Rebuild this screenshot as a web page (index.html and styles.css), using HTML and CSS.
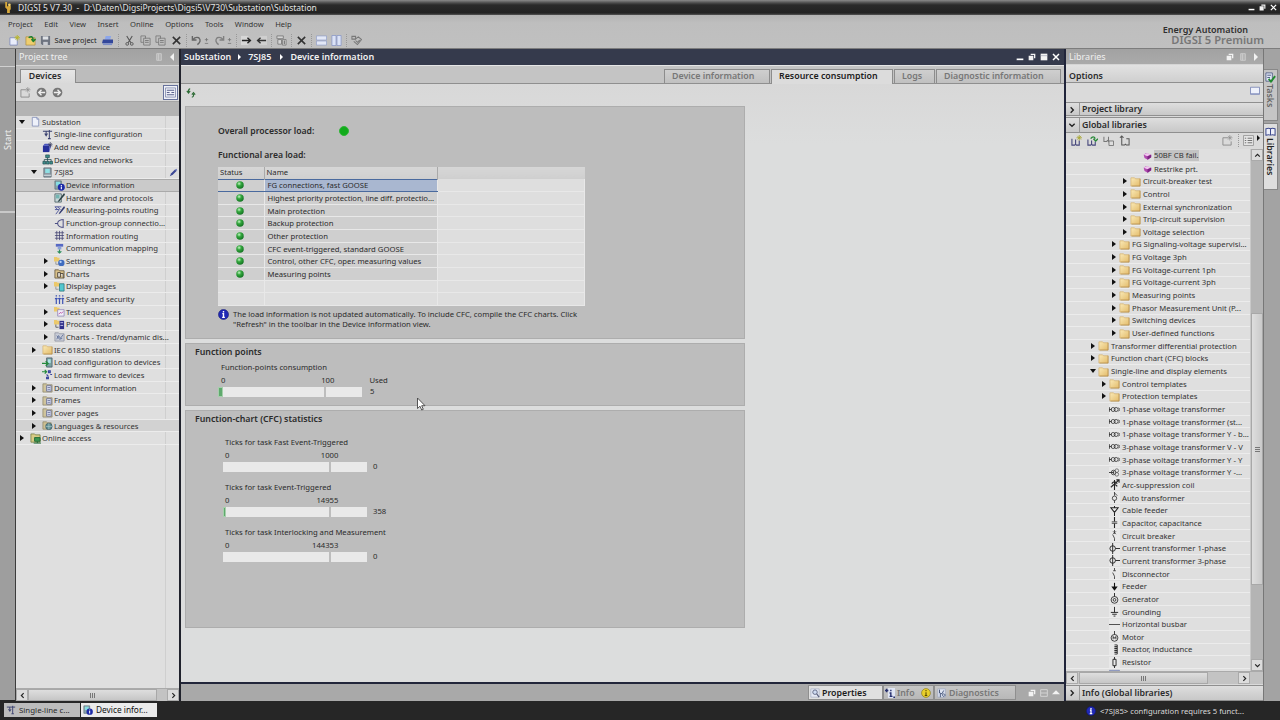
FILE: index.html
```html
<!DOCTYPE html>
<html lang="en">
<head>
    <meta charset="UTF-8">
    <meta name="viewport" content="width=device-width, initial-scale=1.0">
    <title>DIGSI 5 V7.30</title>
    <link rel="stylesheet" href="styles.css">
</head>
<body>

    <!-- icon sprite -->
    <svg class="sprite">
        <defs>
            <linearGradient id="gFolder" x1="0" y1="0" x2="1" y2="1"><stop offset="0" stop-color="#faeab8"/><stop offset="1" stop-color="#e3bb69"/></linearGradient>
            <radialGradient id="gBall" cx=".38" cy=".32" r=".7"><stop offset="0" stop-color="#c8f5c8"/><stop offset=".4" stop-color="#35a83f"/><stop offset="1" stop-color="#117320"/></radialGradient>
        </defs>
        <symbol id="folder" viewBox="0 0 12 12"><path d="M1 2h4l1 1h5v8H1z" fill="url(#gFolder)" stroke="#d0ab66" stroke-width=".7"/><path d="M11 3v8H2" fill="none" stroke="#a8823f" stroke-width=".6"/></symbol>
        <symbol id="page" viewBox="0 0 12 12"><path d="M2.500 1.500h5l2 2v7.500h-7z" fill="#eef1fa" stroke="#7a86b4" stroke-width=".8"/><path d="M7.500 1.500v2h2" fill="none" stroke="#7a86b4" stroke-width=".8"/></symbol>
        <symbol id="line" viewBox="0 0 12 12"><path d="M1 2.500h10M4.500 2.500v5M8 1v9.500M3 5l1.500 2.500L6 5M6.500 10.500h3" fill="none" stroke="#39406f" stroke-width="1.100"/></symbol>
        <symbol id="add" viewBox="0 0 12 12"><path d="M1 4h7v7H1z" fill="#26309a"/><path d="M1 4l2-2h5l2 2-2 7V4z" fill="#4a55bd"/><path d="M9 0v6M6.500 3h5M7.300 1.300l3.500 3.500M10.800 1.300L7.300 4.800" stroke="#3c4160" stroke-width=".8"/></symbol>
        <symbol id="net" viewBox="0 0 12 12"><path d="M4 1h4v3H4zM1 8h3v3H1zM4.700 8h3v3h-3zM8.500 8h3v3h-3z" fill="#3d8f8c" stroke="#20494f" stroke-width=".7"/><path d="M6 4v4M2.500 8V6h7.500v2" fill="none" stroke="#20494f" stroke-width=".8"/></symbol>
        <symbol id="device" viewBox="0 0 12 12"><path d="M2 1h8v10H2z" fill="#8a99a3" stroke="#5b6872" stroke-width=".8"/><path d="M3.500 2h5v4.500h-5z" fill="#8fe0e4"/><path d="M2 9h8" stroke="#dfe6ea"/></symbol>
        <symbol id="devinfo" viewBox="0 0 12 12"><path d="M1 1h7v9H1z" fill="#8aa5ab" stroke="#50666e" stroke-width=".7"/><path d="M2.200 2h4.500v4H2.200z" fill="#86dde2"/><circle cx="8" cy="8" r="3.800" fill="#1d2ba8"/><path d="M8 5.500v1M8 7.200v3" stroke="#fff" stroke-width="1.200"/></symbol>
        <symbol id="hardware" viewBox="0 0 12 12"><path d="M1 2h7v9H1z" fill="#c9d7d8" stroke="#3c5459" stroke-width=".8"/><path d="M2 3h4v4H2z" fill="#74b5b2"/><path d="M11 1L5 9l-1 2 2-1 6-7z" fill="#2b4245"/></symbol>
        <symbol id="measure" viewBox="0 0 12 12"><path d="M1 2h7M1 5h5M1 2l4 4-3 4M4 2l3 3" fill="none" stroke="#4b5299" stroke-width="1"/><path d="M11 1L6 8l-1 2 2-1 5-6z" fill="#333b70"/></symbol>
        <symbol id="fgroup" viewBox="0 0 12 12"><path d="M10 1v10M10 2H8Q4 3 4 6t4 4h2M1 6h3" fill="none" stroke="#4d4f86" stroke-width="1.100"/></symbol>
        <symbol id="grid" viewBox="0 0 12 12"><path d="M3 1v10M6 1v10M9 1v10M1 3h10M1 6h10M1 9h10" stroke="#3d3d6e" stroke-width=".8"/></symbol>
        <symbol id="comm" viewBox="0 0 12 12"><path d="M2 1h8v3H2z" fill="#5769c4"/><path d="M4 4h4v3H4z" fill="#8ba0d8"/><path d="M6 7v4M4 9l2 2 2-2" fill="none" stroke="#2c8f5c" stroke-width="1.200"/></symbol>
        <symbol id="settings" viewBox="0 0 12 12"><path d="M0 1h3l1 1h2v4H0z" fill="#ecc96b"/><circle cx="8" cy="7.500" r="3.500" fill="#3f6cc0"/><circle cx="7.200" cy="6.500" r="1.200" fill="#b8d2f5"/><path d="M2 6v3h3" fill="none" stroke="#777" stroke-width=".7"/></symbol>
        <symbol id="charts" viewBox="0 0 12 12"><path d="M1 2h4l1 1h5v8H1z" fill="#d9c18a" stroke="#594c33" stroke-width=".8"/><path d="M4 5h3v5H4zM7 6h3v5" fill="#e6e2d8" stroke="#40382f" stroke-width=".9"/></symbol>
        <symbol id="display" viewBox="0 0 12 12"><path d="M0 1h3l1 1h2v4H0z" fill="#ecc96b"/><path d="M6 3h5v8H6z" fill="#53c7cf" stroke="#277278" stroke-width=".8"/><path d="M2 6v3h3" fill="none" stroke="#777" stroke-width=".7"/></symbol>
        <symbol id="safety" viewBox="0 0 12 12"><path d="M2.500 4v7M6 4v7M9.500 4v7M1 5h3M4.500 5h3M8 5h3" stroke="#3d52b3" stroke-width="1.300"/><path d="M1.800 2h1.500M5.300 2h1.500M8.800 2h1.500" stroke="#3d52b3" stroke-width="1.500"/></symbol>
        <symbol id="test" viewBox="0 0 12 12"><path d="M0 1h3l1 1h2v4H0z" fill="#ecc96b"/><path d="M4 4h7v7H4z" fill="#f1eef8" stroke="#8a80b5" stroke-width=".8"/><path d="M5 9l2-2 1 1 2-2" fill="none" stroke="#b34ba0" stroke-width="1"/></symbol>
        <symbol id="process" viewBox="0 0 12 12"><path d="M0 1h3l1 1h2v4H0z" fill="#ecc96b"/><path d="M6 2h5v9H6z" fill="#30308a"/><path d="M7 4h3M7 7h3" stroke="#c9c9ee" stroke-width="1"/><path d="M2 6v3h3" fill="none" stroke="#555" stroke-width=".9"/></symbol>
        <symbol id="trend" viewBox="0 0 12 12"><path d="M1 2h4l1 1h5v8H1z" fill="#c9cdd8" stroke="#8b8f9c" stroke-width=".8"/><path d="M3 9l2-4 2 3 3-4M3 5l3 4 3-1" fill="none" stroke="#4d608f" stroke-width=".8"/></symbol>
        <symbol id="loadcfg" viewBox="0 0 12 12"><path d="M5 1h6v10H5z" fill="#7ba3a3" stroke="#456" stroke-width=".8"/><path d="M6.500 2.500h3v4h-3z" fill="#aee4e6"/><path d="M0 7h6M4 4.500L6.700 7 4 9.500" fill="none" stroke="#238a3c" stroke-width="1.400"/></symbol>
        <symbol id="loadfw" viewBox="0 0 12 12"><path d="M0 3h5M3 1l2 2-2 2" fill="none" stroke="#238a3c" stroke-width="1.300"/><path d="M7 2h2v2H7zM9 6h2M5 6l2 2M5 9h2v1.500H5z" fill="#6874c9" stroke="#38449c" stroke-width="1.200"/></symbol>
        <symbol id="doc" viewBox="0 0 12 12"><path d="M1 2h4l1 1h5v8H1z" fill="#cfc49d" stroke="#8c8569" stroke-width=".8"/><path d="M5 4h5v6H5z" fill="#dfe3f3" stroke="#5a6390" stroke-width=".8"/><path d="M6 6h3M6 8h3" stroke="#5a6390" stroke-width=".8"/></symbol>
        <symbol id="lang" viewBox="0 0 12 12"><path d="M1 2h4l1 1h4v7H1z" fill="#cdbf92" stroke="#8c8569" stroke-width=".8"/><circle cx="7.500" cy="7" r="3.500" fill="#5f8f94" stroke="#3c5a66" stroke-width=".8"/><path d="M4 7h7M7.500 3.500v7" stroke="#c0d6d4" stroke-width=".6"/></symbol>
        <symbol id="online" viewBox="0 0 12 12"><path d="M1 1h4l1 1h5v8H1z" fill="#d7cb85" stroke="#6d7a3c" stroke-width=".8"/><path d="M5 5h6v4H5zM4 11h8M8 9v2" fill="#3e9652" stroke="#1f6a35" stroke-width="1"/></symbol>
        <symbol id="cube" viewBox="0 0 12 12"><path d="M2 5l3-2 6 2v3l-4 3-4-2z" fill="#b04ab0"/><path d="M2 5l4-2 4.500 2-4 2z" fill="#f0c8ee"/><path d="M6.500 7v4L11 8V5z" fill="#7d2383"/></symbol>
        <symbol id="vt" viewBox="0 0 12 12"><path d="M.5 3.500v5M0 6h3M10.500 4l1.300 2-1.300 2" fill="none" stroke="#333" stroke-width=".9"/><circle cx="4.500" cy="6" r="2.200" fill="none" stroke="#333" stroke-width=".9"/><circle cx="7.800" cy="6" r="2.200" fill="none" stroke="#333" stroke-width=".9"/></symbol>
        <symbol id="vt3" viewBox="0 0 12 12"><circle cx="5" cy="6" r="2.500" fill="none" stroke="#333" stroke-width=".9"/><circle cx="8.500" cy="4" r="2" fill="none" stroke="#555" stroke-width=".8"/><circle cx="8.500" cy="8" r="2" fill="none" stroke="#555" stroke-width=".8"/><path d="M0 6h5M5 4.500v3" stroke="#333"/></symbol>
        <symbol id="arc" viewBox="0 0 12 12"><path d="M6 1v11M3 5q3-4 6 0M3 8q3-4 6 0M2 9l9-8M8 1h3v3" fill="none" stroke="#222" stroke-width="1.200"/></symbol>
        <symbol id="auto" viewBox="0 0 12 12"><path d="M6 0v4M6 9v3M6 1l3 3" fill="none" stroke="#333" stroke-width=".9"/><circle cx="6" cy="6.800" r="2.400" fill="none" stroke="#333" stroke-width=".9"/></symbol>
        <symbol id="cable" viewBox="0 0 12 12"><path d="M2 3h8L6 8zM6 8v4M6 1v2" fill="none" stroke="#222" stroke-width="1.100"/></symbol>
        <symbol id="cap" viewBox="0 0 12 12"><path d="M6 0v5M6 7v5" stroke="#222" stroke-width="1.200"/><path d="M3 5.300h6M3 6.900h6" stroke="#222" stroke-width=".8"/></symbol>
        <symbol id="cb" viewBox="0 0 12 12"><path d="M6 0v4M6 9v3M6 9L4 5M4.500 1.500l3 3M7.500 1.500l-3 3" stroke="#333" stroke-width=".9"/></symbol>
        <symbol id="ct" viewBox="0 0 12 12"><circle cx="4" cy="6" r="3" fill="none" stroke="#222" stroke-width="1"/><path d="M4 0v12M7 6h5" stroke="#222" stroke-width="1"/></symbol>
        <symbol id="disc" viewBox="0 0 12 12"><path d="M6 0v3M4.500 3h3M6 9v3M6 9L4 5" stroke="#333" stroke-width=".9"/></symbol>
        <symbol id="feeder" viewBox="0 0 12 12"><path d="M6 2v5" stroke="#111" stroke-width="1.200"/><path d="M2.500 6h7L6 10.500z" fill="#111"/></symbol>
        <symbol id="gen" viewBox="0 0 12 12"><circle cx="6" cy="7.500" r="3.700" fill="none" stroke="#222" stroke-width=".9"/><circle cx="6" cy="7.500" r="1.500" fill="none" stroke="#222" stroke-width=".9"/><path d="M6 0v4" stroke="#222"/></symbol>
        <symbol id="ground" viewBox="0 0 12 12"><path d="M6 1v6M2 7h8M3.500 9h5M5 11h2" stroke="#222" stroke-width="1"/></symbol>
        <symbol id="busbar" viewBox="0 0 12 12"><path d="M0 6h12" stroke="#444" stroke-width="1"/></symbol>
        <symbol id="motor" viewBox="0 0 12 12"><circle cx="6" cy="7.500" r="3.700" fill="none" stroke="#222" stroke-width=".9"/><path d="M6 0v4M4.500 9V6l1.500 2 1.500-2v3" fill="none" stroke="#222" stroke-width=".9"/></symbol>
        <symbol id="reactor" viewBox="0 0 12 12"><path d="M6 1h3v2H6h3v2H6h3v2H6h3v2H6h3v2H6" fill="none" stroke="#222" stroke-width=".9"/></symbol>
        <symbol id="resistor" viewBox="0 0 12 12"><path d="M4.300 2.500h3.400v7H4.300zM6 0v2.500M6 9.500V12" fill="none" stroke="#222" stroke-width="1"/></symbol>
        <symbol id="info" viewBox="0 0 12 12"><circle cx="6" cy="6" r="5.500" fill="#2029b5" stroke="#101670" stroke-width=".6"/><path d="M6 2.300v1.600M4.700 5H6v4M4.500 9.200h3" fill="none" stroke="#fff" stroke-width="1.500"/></symbol>
        <symbol id="ball" viewBox="0 0 12 12"><circle cx="6" cy="6" r="5.600" fill="url(#gBall)"/></symbol>
        <symbol id="new" viewBox="0 0 12 12"><path d="M1 3h6l2 2v6H1z" fill="#e9edfa" stroke="#7280b8" stroke-width=".8"/><path d="M9 0v6M6 3h6M7 1l4 4M11 1L7 5" stroke="#b9b62a" stroke-width="1"/></symbol>
        <symbol id="open" viewBox="0 0 12 12"><path d="M1 2h4l1 1h5v8H1z" fill="#efce6f" stroke="#a8873a" stroke-width=".7"/><path d="M4 3q4-3 5 2M7 4.500l2 2.500 2.500-2.500" fill="none" stroke="#1e7f2f" stroke-width="1.700"/></symbol>
        <symbol id="save" viewBox="0 0 12 12"><path d="M1 1h10v10H2.500L1 9.500z" fill="#6e7480"/><path d="M3 1.500h6V5H3z" fill="#dfe2e6"/><path d="M3.500 7.500h5V11h-5z" fill="#c9ccd2"/></symbol>
        <symbol id="print" viewBox="0 0 12 12"><path d="M4 1h6l-1 4H3z" fill="#8ca6ea"/><path d="M1 5h11v4H0z" fill="#33479b"/><path d="M1 9h10v2H1z" fill="#7c8dc7"/></symbol>
        <symbol id="cut" viewBox="0 0 12 12"><path d="M3 1l4.500 7.500M9 1L4.500 8.500" stroke="#555" stroke-width="1.200"/><circle cx="3.500" cy="9.700" r="1.500" fill="none" stroke="#555"/><circle cx="8.500" cy="9.700" r="1.500" fill="none" stroke="#555"/></symbol>
        <symbol id="copy" viewBox="0 0 12 12"><path d="M1 1h5v3M1 1v7h3M4 3.500h7V11H4z" fill="none" stroke="#777" stroke-width=".9"/><path d="M5.500 6h4M5.500 8h4" stroke="#777"/></symbol>
        <symbol id="del" viewBox="0 0 12 12"><path d="M2 2l8 8M10 2l-8 8" stroke="#333" stroke-width="1.700"/></symbol>
        <symbol id="undo" viewBox="0 0 12 12"><path d="M1.500 1v4.500H6M2 5q3-3.500 6.500-2Q12 6.500 7 10.500" fill="none" stroke="#666" stroke-width="1.500"/></symbol>
        <symbol id="redo" viewBox="0 0 12 12"><path d="M10.500 1v4.500H6M10 5Q7 1.500 3.500 3 0 6.500 5 10.500" fill="none" stroke="#808080" stroke-width="1.500"/></symbol>
        <symbol id="pm" viewBox="0 0 6 12"><path d="M3 3v4M1 5h4M1 9.500h4" stroke="#777" stroke-width="1"/></symbol>
        <symbol id="right" viewBox="0 0 12 12"><path d="M0 1h8v10H0z" fill="#d7d7d7"/><path d="M1 6h9M7 3l3.300 3L7 9" fill="none" stroke="#222" stroke-width="1.500"/></symbol>
        <symbol id="left" viewBox="0 0 12 12"><path d="M4 1h8v10H4z" fill="#cfcfcf"/><path d="M11 6H2M5 3L1.700 6 5 9" fill="none" stroke="#333" stroke-width="1.500"/></symbol>
        <symbol id="blocks" viewBox="0 0 12 12"><path d="M1 1h7v3H1zM2 5h4v5H2zM7 5h4v6H7z" fill="#d5d5d5" stroke="#777" stroke-width=".9"/><path d="M9 6v4" stroke="#555"/></symbol>
        <symbol id="splith" viewBox="0 0 12 12"><path d="M.5 1h11v4.500H.5zM.5 6.500h11V11H.5z" fill="#e3e8f6" stroke="#93a0ca" stroke-width=".8"/></symbol>
        <symbol id="splitv" viewBox="0 0 12 12"><path d="M1 .5h4.500v11H1zM6.500 .5H11v11H6.500z" fill="#dce3f6" stroke="#8493c6" stroke-width=".8"/></symbol>
        <symbol id="scan" viewBox="0 0 12 12"><path d="M1 1.500h4v3H1zM4 5l4-3 3.500 3L7 10.500 3 7M5 6l2 2 2.500-2.500" fill="none" stroke="#777" stroke-width="1.100"/></symbol>
        <symbol id="newgrey" viewBox="0 0 12 12"><path d="M1 3h5M1 3v8h9V7" fill="none" stroke="#8b8b8b" stroke-width="1"/><path d="M8.500 0v6M5.500 3h6M6.500 1l4 4M10.500 1l-4 4" stroke="#8b8b8b" stroke-width=".7"/></symbol>
        <symbol id="back" viewBox="0 0 12 12"><circle cx="6" cy="6" r="5.300" fill="#777"/><path d="M10 6H3M6 3L3 6l3 3" fill="none" stroke="#eee" stroke-width="1.500"/></symbol>
        <symbol id="fwd" viewBox="0 0 12 12"><circle cx="6" cy="6" r="5.300" fill="#777"/><path d="M2 6h7M6 3l3 3-3 3" fill="none" stroke="#eee" stroke-width="1.500"/></symbol>
        <symbol id="list" viewBox="0 0 12 12"><path d="M.5 1h11v10H.5z" fill="#eef0f8" stroke="#7078a0" stroke-width=".8"/><path d="M2 3.500h8M2 6h3M7 6h3M2 8.500h8" stroke="#59618c" stroke-width="1.200"/></symbol>
        <symbol id="refresh" viewBox="0 0 12 12"><path d="M5 1Q2.500 1 3 5M1 3.500L3 6l2-2.500" fill="none" stroke="#2d6b35" stroke-width="1.400"/><path d="M7 11q2.500 0 2-4M7 8l2-2.500L11 8" fill="none" stroke="#2d6b35" stroke-width="1.400"/></symbol>
        <symbol id="restore" viewBox="0 0 12 12"><path d="M4 1h7v7H9V3H4zM1 4h7v7H1z" fill="#f2f2f2"/></symbol>
        <symbol id="book" viewBox="0 0 12 12"><path d="M1 3q3-1 5 0 2-1 5 0v7q-3-1-5 0-2-1-5 0zM6 3v7" fill="#eef0fa" stroke="#3f4b8f" stroke-width="1.100"/></symbol>
        <symbol id="booknew" viewBox="0 0 12 12"><path d="M1 4v7h3l1-1 1 1h3V6M5 5v5" fill="none" stroke="#46477c" stroke-width="1.200"/><path d="M9 0v6M6 3h6M7 1l4 4M11 1L7 5" stroke="#a8a630" stroke-width=".9"/></symbol>
        <symbol id="bookopen" viewBox="0 0 12 12"><path d="M1 5v6h3l1-1 1 1h3V7M5 6v4" fill="none" stroke="#46477c" stroke-width="1.200"/><path d="M4 4q3-4 5 0M7 4l2.500 2.500L12 4" fill="none" stroke="#2a8a3a" stroke-width="1.500"/></symbol>
        <symbol id="booksave" viewBox="0 0 12 12"><path d="M1 2v5h3l1-1 1 1V2" fill="none" stroke="#777" stroke-width="1.100"/><path d="M6.500 6.500h5v5h-5z" fill="#ddd" stroke="#777"/></symbol>
        <symbol id="bookup" viewBox="0 0 12 12"><path d="M3 5v6h3l1-1 1 1h3V4H8M3 8V1M1 3l2-2 2 2" fill="none" stroke="#555" stroke-width="1.100"/></symbol>
        <symbol id="task" viewBox="0 0 12 12"><path d="M1 1h7v9H1z" fill="#dfe6f4" stroke="#4a5880" stroke-width=".9"/><path d="M2.500 3.500h4M2.500 6h3" stroke="#4a5880"/><path d="M4 7.500L6.500 10.500 11 4.500" fill="none" stroke="#208a2e" stroke-width="2"/></symbol>
        <symbol id="props" viewBox="0 0 12 12"><path d="M1 1h10v10H1z" fill="#e6eaf5" stroke="#a3aac0" stroke-width=".8"/><circle cx="6" cy="5" r="2.700" fill="#cfdcf2" stroke="#555b78" stroke-width="1"/><path d="M8 7l3 4" stroke="#555b78" stroke-width="1.300"/></symbol>
        <symbol id="infotab" viewBox="0 0 12 12"><path d="M3.500 0H12v12H3.500z" fill="#dfe5f4"/><path d="M0 3h4M2 1v4M7 2v2M5.500 6H7v4M5.500 10H9M10 11h2" fill="none" stroke="#27306e" stroke-width="1.700"/></symbol>
        <symbol id="diag" viewBox="0 0 12 12"><path d="M1 1h9v10H1z" fill="#dfe5f2" stroke="#9aa3bd" stroke-width=".8"/><path d="M3 2v4l3 1 2-4M8 7a1.500 1.500 0 1 0 .1 0M4 7v4" fill="none" stroke="#3f5075" stroke-width="1.100"/></symbol>
        <symbol id="warn" viewBox="0 0 12 12"><circle cx="6" cy="6" r="5.300" fill="#e8cf2c" stroke="#8d7b1c" stroke-width=".8"/><path d="M6 2.500v1.500M6 5v4M4.500 9h3" stroke="#5a4a00" stroke-width="1.300"/></symbol>
        <symbol id="pen" viewBox="0 0 12 12"><path d="M1 11l2-4 5-5 2 2-5 5z" fill="#3b4796"/><path d="M8 2l2-1 1 2-1 1z" fill="#6d78bd"/></symbol>
        <symbol id="view" viewBox="0 0 12 12"><path d="M.6 1.500h10.800v8.500H.6z" fill="#eef1fb" stroke="#6f7caf" stroke-width=".9"/><path d="M1 9.300h10" stroke="#8d98c4" stroke-width="1.200"/></symbol>
        <symbol id="items" viewBox="0 0 12 12"><path d="M.6 .6h10.800v10.800H.6z" fill="#e8e8e8" stroke="#888" stroke-width=".8"/><path d="M2 3.500h1.500M5 3.500h5M2 6h1.500M5 6h5M2 8.500h1.500M5 8.500h5" stroke="#666" stroke-width="1"/></symbol>
        <symbol id="close" viewBox="0 0 12 12"><path d="M1.500 1.500l9 9M10.500 1.500l-9 9" stroke="#fff" stroke-width="2.200"/></symbol>
        <symbol id="min" viewBox="0 0 12 12"><path d="M1 9.500h10" stroke="#fff" stroke-width="2.500"/></symbol>
        <symbol id="max" viewBox="0 0 12 12"><path d="M1 1h10v10H1z" fill="#f4f4f4"/><path d="M1 4h10" stroke="#9aa0b0"/></symbol>
        <symbol id="chl" viewBox="0 0 12 12"><path d="M8 2L4 6l4 4" fill="none" stroke="#222" stroke-width="2"/></symbol>
        <symbol id="chr" viewBox="0 0 12 12"><path d="M4 2l4 4-4 4" fill="none" stroke="#222" stroke-width="2"/></symbol>
        <symbol id="chd" viewBox="0 0 12 12"><path d="M2 4l4 4 4-4" fill="none" stroke="#222" stroke-width="2"/></symbol>
        <symbol id="chu" viewBox="0 0 12 12"><path d="M2 8l4-4 4 4" fill="none" stroke="#222" stroke-width="2"/></symbol>
        <symbol id="col" viewBox="0 0 12 12"><path d="M2.500 1h7v10h-7zM5 1v10" fill="#b5b5b5" stroke="#d8d8d8" stroke-width="1"/></symbol>
        <symbol id="tril" viewBox="0 0 12 12"><path d="M9 0v12L3 6z" fill="#f2f2f2"/></symbol>
        <symbol id="trir" viewBox="0 0 12 12"><path d="M3 0v12l6-6z" fill="#f2f2f2"/></symbol>
        <symbol id="triu" viewBox="0 0 12 12"><path d="M0 8h12L6 2z" fill="#f2f2f2"/></symbol>
        <symbol id="rows" viewBox="0 0 12 12"><path d="M1 1h10v10H1zM1 6h10" fill="none" stroke="#d6d6d6" stroke-width="1.400"/></symbol>
        <symbol id="logo" viewBox="0 0 8 12"><path d="M1 0v6l2 2v4h3V9l1-1V4H5L3 5V0z" fill="#d9a93a"/><circle cx="5.500" cy="3" r="1.500" fill="#f0cf6a"/></symbol>
    </svg>

    <div class="titlebar">
        <svg class="logo"><use href="#logo"/></svg>
        <span class="title">DIGSI 5 V7.30 &nbsp;- &nbsp;D:\Daten\DigsiProjects\Digsi5\V730\Substation\Substation</span>
        <div class="winbtns">
            <svg><use href="#min"/></svg>
            <svg><use href="#restore"/></svg>
            <svg><use href="#close"/></svg>
        </div>
    </div>

    <div class="header">
        <div class="header-left">
            <div class="menu">
                <span>Project</span><span>Edit</span><span>View</span><span>Insert</span><span>Online</span><span>Options</span><span>Tools</span><span>Window</span><span>Help</span>
            </div>
            <div class="toolbar">
                <svg><use href="#new"/></svg>
                <svg><use href="#open"/></svg>
                <svg><use href="#save"/></svg>
                <span class="savetext">Save project</span>
                <svg><use href="#print"/></svg>
                <i class="sep"></i>
                <svg><use href="#cut"/></svg>
                <svg><use href="#copy"/></svg>
                <svg><use href="#copy"/></svg>
                <svg><use href="#del"/></svg>
                <i class="sep"></i>
                <svg><use href="#undo"/></svg>
                <svg class="pm"><use href="#pm"/></svg>
                <svg><use href="#redo"/></svg>
                <svg class="pm"><use href="#pm"/></svg>
                <i class="sep"></i>
                <svg><use href="#right"/></svg>
                <svg><use href="#left"/></svg>
                <i class="sep"></i>
                <svg><use href="#blocks"/></svg>
                <i class="sep"></i>
                <svg><use href="#del"/></svg>
                <i class="sep"></i>
                <svg><use href="#splith"/></svg>
                <svg><use href="#splitv"/></svg>
                <i class="sep"></i>
                <svg><use href="#scan"/></svg>
            </div>
        </div>
        <div class="brand">
            <div class="brand1">Energy Automation</div>
            <div class="brand2">DIGSI 5 Premium</div>
        </div>
    </div>

    <div class="workspace">

        <div class="start"><span>Start</span></div>

        <!-- project tree -->
        <div class="left">
            <div class="panelhead"><span>Project tree</span><svg><use href="#col"/></svg><svg><use href="#tril"/></svg></div>
            <div class="tabrow"><div class="devtab">Devices</div></div>
            <div class="lefttools">
                <svg><use href="#newgrey"/></svg>
                <svg><use href="#back"/></svg>
                <svg><use href="#fwd"/></svg>
                <div class="listbtn"><svg><use href="#list"/></svg></div>
            </div>
            <div class="band"></div>
            <ul class="tree lefttree">
                <li class="l0"><b class="open"></b><svg><use href="#page"/></svg>Substation</li>
                <li class="l1"><b></b><svg><use href="#line"/></svg>Single-line configuration</li>
                <li class="l1"><b></b><svg><use href="#add"/></svg>Add new device</li>
                <li class="l1"><b></b><svg><use href="#net"/></svg>Devices and networks</li>
                <li class="l1"><b class="open"></b><svg><use href="#device"/></svg>7SJ85<svg class="pen"><use href="#pen"/></svg></li>
                <li class="l2 current"><b></b><svg><use href="#devinfo"/></svg>Device information</li>
                <li class="l2"><b></b><svg><use href="#hardware"/></svg>Hardware and protocols</li>
                <li class="l2"><b></b><svg><use href="#measure"/></svg>Measuring-points routing</li>
                <li class="l2"><b></b><svg><use href="#fgroup"/></svg>Function-group connectio...</li>
                <li class="l2"><b></b><svg><use href="#grid"/></svg>Information routing</li>
                <li class="l2"><b></b><svg><use href="#comm"/></svg>Communication mapping</li>
                <li class="l2"><b class="shut"></b><svg><use href="#settings"/></svg>Settings</li>
                <li class="l2"><b class="shut"></b><svg><use href="#charts"/></svg>Charts</li>
                <li class="l2"><b class="shut"></b><svg><use href="#display"/></svg>Display pages</li>
                <li class="l2"><b></b><svg><use href="#safety"/></svg>Safety and security</li>
                <li class="l2"><b class="shut"></b><svg><use href="#test"/></svg>Test sequences</li>
                <li class="l2"><b class="shut"></b><svg><use href="#process"/></svg>Process data</li>
                <li class="l2"><b class="shut"></b><svg><use href="#trend"/></svg>Charts - Trend/dynamic dis...</li>
                <li class="l1"><b class="shut"></b><svg><use href="#folder"/></svg>IEC 61850 stations</li>
                <li class="l1"><b></b><svg><use href="#loadcfg"/></svg>Load configuration to devices</li>
                <li class="l1"><b></b><svg><use href="#loadfw"/></svg>Load firmware to devices</li>
                <li class="l1"><b class="shut"></b><svg><use href="#doc"/></svg>Document information</li>
                <li class="l1"><b class="shut"></b><svg><use href="#doc"/></svg>Frames</li>
                <li class="l1"><b class="shut"></b><svg><use href="#doc"/></svg>Cover pages</li>
                <li class="l1 shade"><b class="shut"></b><svg><use href="#lang"/></svg>Languages &amp; resources</li>
                <li class="l0"><b class="shut"></b><svg><use href="#online"/></svg>Online access</li>
            </ul>
            <div class="hscroll">
                <span class="sbtn"><svg><use href="#chl"/></svg></span>
                <span class="hthumb"><i></i><i></i><i></i></span>
                <span class="sbtn"><svg><use href="#chr"/></svg></span>
            </div>
        </div>

        <!-- editor area -->
        <div class="main">
            <div class="mainhead">
                <span>Substation</span><i></i><span>7SJ85</span><i></i><span>Device information</span>
                <div class="winbtns">
                    <svg><use href="#min"/></svg>
                    <svg><use href="#restore"/></svg>
                    <svg><use href="#max"/></svg>
                    <svg><use href="#close"/></svg>
                </div>
            </div>
            <div class="maintabs">
                <div class="tab t1">Device information</div>
                <div class="tab t2 active">Resource consumption</div>
                <div class="tab t3">Logs</div>
                <div class="tab t4">Diagnostic information</div>
            </div>
            <div class="content">
                <div class="maintools"><svg><use href="#refresh"/></svg></div>

                <div class="card load">
                    <div class="overall"><span>Overall processor load:</span><i class="dot"></i></div>
                    <div class="arealabel">Functional area load:</div>
                    <table>
                        <tr><th class="c1">Status</th><th class="c2">Name</th><th></th></tr>
                        <tr class="sel"><td><svg><use href="#ball"/></svg></td><td>FG connections, fast GOOSE</td><td></td></tr>
                        <tr><td><svg><use href="#ball"/></svg></td><td class="tight">Highest priority protection, line diff. protectio...</td><td></td></tr>
                        <tr><td><svg><use href="#ball"/></svg></td><td>Main protection</td><td></td></tr>
                        <tr><td><svg><use href="#ball"/></svg></td><td>Backup protection</td><td></td></tr>
                        <tr><td><svg><use href="#ball"/></svg></td><td>Other protection</td><td></td></tr>
                        <tr><td><svg><use href="#ball"/></svg></td><td>CFC event-triggered, standard GOOSE</td><td></td></tr>
                        <tr><td><svg><use href="#ball"/></svg></td><td>Control, other CFC, oper. measuring values</td><td></td></tr>
                        <tr><td><svg><use href="#ball"/></svg></td><td>Measuring points</td><td></td></tr>
                        <tr class="blank"><td></td><td></td><td></td></tr>
                        <tr class="blank"><td></td><td></td><td></td></tr>
                    </table>
                    <div class="note">
                        <svg><use href="#info"/></svg>
                        <p>The load information is not updated automatically. To include CFC, compile the CFC charts. Click<br>"Refresh" in the toolbar in the Device information view.</p>
                    </div>
                </div>

                <div class="card points">
                    <h2>Function points</h2>
                    <div class="gauge g0">
                        <div class="glabel">Function-points consumption</div>
                        <div class="scale"><span>0</span><span class="limit">100</span><span class="used">Used</span></div>
                        <div class="meter"><div class="bar"><i style="width: 5%"></i></div><div class="over"></div><span>5</span></div>
                    </div>
                </div>

                <div class="card cfc">
                    <h2>Function-chart (CFC) statistics</h2>
                    <div class="gauge">
                        <div class="glabel">Ticks for task Fast Event-Triggered</div>
                        <div class="scale"><span>0</span><span class="limit">1000</span></div>
                        <div class="meter"><div class="bar"></div><div class="over"></div><span>0</span></div>
                    </div>
                    <div class="gauge">
                        <div class="glabel">Ticks for task Event-Triggered</div>
                        <div class="scale"><span>0</span><span class="limit">14955</span></div>
                        <div class="meter"><div class="bar"><i style="width: 2.4%"></i></div><div class="over"></div><span>358</span></div>
                    </div>
                    <div class="gauge">
                        <div class="glabel">Ticks for task Interlocking and Measurement</div>
                        <div class="scale"><span>0</span><span class="limit">144353</span></div>
                        <div class="meter"><div class="bar"></div><div class="over"></div><span>0</span></div>
                    </div>
                </div>
            </div>
            <div class="inspector">
                <div class="itab i1 active"><svg><use href="#props"/></svg>Properties</div>
                <div class="itab i2"><svg><use href="#infotab"/></svg>Info<svg class="warn"><use href="#warn"/></svg></div>
                <div class="itab i3"><svg><use href="#diag"/></svg>Diagnostics</div>
                <div class="ibtns">
                    <svg><use href="#restore"/></svg>
                    <svg><use href="#rows"/></svg>
                    <svg><use href="#triu"/></svg>
                </div>
            </div>
            <svg class="cursor" viewBox="0 0 9 14"><path d="M1 1v10.500l2.500-2.300L5.200 13l1.600-.7L5.200 8.700h3.300z" fill="#fff" stroke="#444" stroke-width=".9"/></svg>
        </div>

        <!-- libraries -->
        <div class="right">
            <div class="panelhead"><span>Libraries</span><svg><use href="#restore"/></svg><svg><use href="#col"/></svg><svg><use href="#trir"/></svg></div>
            <div class="options">Options</div>
            <div class="optbar"><svg><use href="#view"/></svg></div>
            <div class="acc"><span><svg><use href="#chr"/></svg></span>Project library</div>
            <div class="acc global"><span><svg><use href="#chd"/></svg></span>Global libraries</div>
            <div class="libtools">
                <svg><use href="#booknew"/></svg>
                <svg><use href="#bookopen"/></svg>
                <svg><use href="#booksave"/></svg>
                <svg><use href="#bookup"/></svg>
                <svg class="push"><use href="#newgrey"/></svg>
                <i class="sep"></i>
                <svg><use href="#items"/></svg>
                <b></b>
            </div>
            <div class="libbody">
                <ul class="tree libtree">
                    <li class="r4"><b></b><svg><use href="#cube"/></svg><mark>50BF CB fail.</mark></li>
                    <li class="r4"><b></b><svg><use href="#cube"/></svg>Restrike prt.</li>
                    <li class="r3"><b class="shut"></b><svg><use href="#folder"/></svg>Circuit-breaker test</li>
                    <li class="r3"><b class="shut"></b><svg><use href="#folder"/></svg>Control</li>
                    <li class="r3"><b class="shut"></b><svg><use href="#folder"/></svg>External synchronization</li>
                    <li class="r3"><b class="shut"></b><svg><use href="#folder"/></svg>Trip-circuit supervision</li>
                    <li class="r3"><b class="shut"></b><svg><use href="#folder"/></svg>Voltage selection</li>
                    <li class="r2"><b class="shut"></b><svg><use href="#folder"/></svg>FG Signaling-voltage supervisi...</li>
                    <li class="r2"><b class="shut"></b><svg><use href="#folder"/></svg>FG Voltage 3ph</li>
                    <li class="r2"><b class="shut"></b><svg><use href="#folder"/></svg>FG Voltage-current 1ph</li>
                    <li class="r2"><b class="shut"></b><svg><use href="#folder"/></svg>FG Voltage-current 3ph</li>
                    <li class="r2"><b class="shut"></b><svg><use href="#folder"/></svg>Measuring points</li>
                    <li class="r2"><b class="shut"></b><svg><use href="#folder"/></svg>Phasor Measurement Unit (P...</li>
                    <li class="r2"><b class="shut"></b><svg><use href="#folder"/></svg>Switching devices</li>
                    <li class="r2"><b class="shut"></b><svg><use href="#folder"/></svg>User-defined functions</li>
                    <li class="r0"><b class="shut"></b><svg><use href="#folder"/></svg>Transformer differential protection</li>
                    <li class="r0"><b class="shut"></b><svg><use href="#folder"/></svg>Function chart (CFC) blocks</li>
                    <li class="r0"><b class="open"></b><svg><use href="#folder"/></svg>Single-line and display elements</li>
                    <li class="r1"><b class="shut"></b><svg><use href="#folder"/></svg>Control templates</li>
                    <li class="r1"><b class="shut"></b><svg><use href="#folder"/></svg>Protection templates</li>
                    <li class="r1 el"><b></b><svg><use href="#vt"/></svg>1-phase voltage transformer</li>
                    <li class="r1 el"><b></b><svg><use href="#vt"/></svg>1-phase voltage transformer (st...</li>
                    <li class="r1 el"><b></b><svg><use href="#vt"/></svg>1-phase voltage transformer Y - b...</li>
                    <li class="r1 el"><b></b><svg><use href="#vt"/></svg>3-phase voltage transformer V - V</li>
                    <li class="r1 el"><b></b><svg><use href="#vt"/></svg>3-phase voltage transformer Y - Y</li>
                    <li class="r1 el"><b></b><svg><use href="#vt3"/></svg>3-phase voltage transformer Y -...</li>
                    <li class="r1 el"><b></b><svg><use href="#arc"/></svg>Arc-suppression coil</li>
                    <li class="r1 el"><b></b><svg><use href="#auto"/></svg>Auto transformer</li>
                    <li class="r1 el"><b></b><svg><use href="#cable"/></svg>Cable feeder</li>
                    <li class="r1 el"><b></b><svg><use href="#cap"/></svg>Capacitor, capacitance</li>
                    <li class="r1 el"><b></b><svg><use href="#cb"/></svg>Circuit breaker</li>
                    <li class="r1 el"><b></b><svg><use href="#ct"/></svg>Current transformer 1-phase</li>
                    <li class="r1 el"><b></b><svg><use href="#ct"/></svg>Current transformer 3-phase</li>
                    <li class="r1 el"><b></b><svg><use href="#disc"/></svg>Disconnector</li>
                    <li class="r1 el"><b></b><svg><use href="#feeder"/></svg>Feeder</li>
                    <li class="r1 el"><b></b><svg><use href="#gen"/></svg>Generator</li>
                    <li class="r1 el"><b></b><svg><use href="#ground"/></svg>Grounding</li>
                    <li class="r1 el"><b></b><svg><use href="#busbar"/></svg>Horizontal busbar</li>
                    <li class="r1 el"><b></b><svg><use href="#motor"/></svg>Motor</li>
                    <li class="r1 el"><b></b><svg><use href="#reactor"/></svg>Reactor, inductance</li>
                    <li class="r1 el"><b></b><svg><use href="#resistor"/></svg>Resistor</li>
                    <li class="r1"><b></b><svg><use href="#view"/></svg></li>
                </ul>
                <div class="vscroll">
                    <span class="vbtn"><svg><use href="#chu"/></svg></span>
                    <span class="vthumb"><i></i><i></i><i></i></span>
                    <span class="vbtn"><svg><use href="#chd"/></svg></span>
                </div>
            </div>
            <div class="hscroll">
                <span class="sbtn"><svg><use href="#chl"/></svg></span>
                <span class="hthumb"><i></i><i></i><i></i></span>
                <span class="sbtn"><svg><use href="#chr"/></svg></span>
            </div>
            <div class="acc bottom"><span><svg><use href="#chr"/></svg></span>Info (Global libraries)</div>
        </div>

        <div class="sidetabs">
            <div class="side tasks"><svg><use href="#task"/></svg><span>Tasks</span></div>
            <div class="side libs"><svg><use href="#book"/></svg><span>Libraries</span></div>
        </div>
    </div>

    <div class="statusbar">
        <div class="task t1"><svg><use href="#line"/></svg>Single-line c...</div>
        <div class="task t2"><svg><use href="#devinfo"/></svg>Device infor...</div>
        <div class="message"><svg><use href="#info"/></svg>&lt;7SJ85&gt; configuration requires 5 funct...</div>
    </div>

</body>
</html>
```

FILE: styles.css
```css
* {
    box-sizing: border-box;
}

body {
    margin: 0;
    width: 1280px;
    height: 720px;
    overflow: hidden;
    display: grid;
    grid-template-rows: 15px 34px 653px 18px;
    background: #262626;
    color: #2b2b2b;
    font-family: "Noto Sans", "Open Sans", sans-serif;
    font-size: 7.7px;
    line-height: 12px;
    white-space: nowrap;
}

svg {
    width: 10px;
    height: 10px;
    flex: none;
    display: block;
}

.sprite {
    position: absolute;
    width: 0;
    height: 0;
}

/* title bar */
.titlebar {
    display: flex;
    align-items: center;
    background: linear-gradient(#8a8a8a, #4a4a4a 3px, #2a2a2a 5px, #222 13px, #555);
    color: #e4e4e4;
    font-size: 8.5px;
    padding: 0 3px 0 4px;
}

.titlebar .logo {
    width: 8px;
    height: 11px;
    margin-right: 6px;
}

.title {
    flex: 1;
}

.winbtns {
    display: flex;
    gap: 4px;
    align-items: center;
}

.winbtns svg {
    width: 7px;
    height: 7px;
}

/* menu and toolbar */
.header {
    display: flex;
    justify-content: space-between;
    background: linear-gradient(#b3b3b3, #bebebe 8px, #c0c0c0);
    border-bottom: 1px solid #7d7d7d;
}

.menu {
    display: flex;
    gap: 11.5px;
    padding: 3px 0 0 8px;
    height: 17px;
    color: #333;
    font-size: 7.6px;
}

.toolbar {
    display: flex;
    align-items: center;
    height: 16px;
    gap: 4.5px;
    padding-left: 9px;
}

.toolbar svg {
    width: 11px;
    height: 11px;
}

.toolbar .savetext {
    color: #222;
    font-size: 7.4px;
    margin: 0 1px 0 -1px;
}

.toolbar .pm {
    width: 5px;
    margin: 0 0 0 -2px;
}

.sep {
    width: 1px;
    height: 13px;
    border-left: 1px dotted #999;
    margin: 0 -0.6px;
}

/* the first separator stands a little further from the printer */
.savetext + svg + .sep {
    margin: 0 0.5px;
}

.brand {
    padding: 9px 16px 0 0;
    text-align: right;
}

.brand1 {
    font-size: 9px;
    font-weight: 600;
    line-height: 11px;
    color: #2f2f2f;
    padding-right: 16px;
}

.brand2 {
    font-size: 11.2px;
    font-weight: 600;
    line-height: 9px;
    color: #777;
}

.workspace {
    display: grid;
    grid-template-columns: 15px 166px 883px 200px 16px;
    min-height: 0;
}

.workspace > div {
    min-width: 0;
    min-height: 0;
}

/* start strip */
.start {
    background: #9e9e9e;
    border-top: 17px solid #a2a2a2;
    height: 651px;
}

.start span {
    display: block;
    writing-mode: vertical-rl;
    transform: rotate(180deg);
    color: #eee;
    font-size: 9px;
    line-height: 15px;
    height: 147px;
    border-top: 2px solid #c9c9c9;
    border-bottom: 1px solid #d0d0d0;
    padding-bottom: 2px;
    padding-top: 61px;
}

/* shared panel parts */
.panelhead {
    display: flex;
    align-items: center;
    gap: 5px;
    height: 17px;
    background: linear-gradient(#a2a2a2, #aaa);
    border-bottom: 1px solid #d5d5d5;
    color: #efefef;
    font-size: 9px;
    padding: 0 3px 0 3px;
}

.panelhead span {
    flex: 1;
}

.panelhead svg {
    width: 8px;
    height: 8px;
}

.tree {
    list-style: none;
    margin: 0;
    padding: 0;
    background: #dfdfdf;
    color: #333;
    overflow: hidden;
}

.tree li {
    display: flex;
    align-items: center;
    height: 12.66px;
    border-bottom: 1px solid #ececec;
}

.tree svg {
    width: 11px;
    height: 11px;
    margin-right: 1px;
}

.tree b {
    width: 12px;
    height: 6px;
    flex: none;
}

.tree b::before {
    content: "";
    display: block;
}

.tree .shut::before {
    border-left: 4px solid #111;
    border-top: 3px solid transparent;
    border-bottom: 3px solid transparent;
    width: 0;
    margin-left: 2px;
}

.tree .open::before {
    border-top: 4px solid #111;
    border-left: 3px solid transparent;
    border-right: 3px solid transparent;
    width: 0;
    margin: 1px 0 0 1px;
}

.hscroll {
    display: flex;
    height: 13px;
    background: #c3c3c3;
    border-top: 1px solid #aaa;
}

.sbtn, .vbtn {
    width: 12px;
    height: 12px;
    flex: none;
    display: flex;
    align-items: center;
    justify-content: center;
    background: #dcdcdc;
    border: 1px solid #aaa;
}

.sbtn svg, .vbtn svg {
    width: 7px;
    height: 7px;
}

.hthumb {
    display: flex;
    align-items: center;
    justify-content: center;
    gap: 1px;
    background: linear-gradient(#dedede, #c6c6c6);
    border: 1px solid #a8a8a8;
}

.hthumb i {
    width: 1px;
    height: 5px;
    background: #777;
}

/* project tree */
.left {
    display: flex;
    flex-direction: column;
    height: 652px;
    border-left: 1px solid #3c3c3c;
    border-right: 2px solid #20222c;
    background: #dfdfdf;
}

.tabrow {
    height: 17px;
    background: #bcbcbc;
    border-bottom: 1px solid #8a8a8a;
    padding: 3px 0 0 4px;
}

.devtab {
    width: 56px;
    height: 14px;
    background: linear-gradient(#e6e6e6, #dadada);
    border: 1px solid #8c8c8c;
    border-bottom: none;
    text-align: center;
    font-weight: 600;
    font-size: 8.8px;
    line-height: 13px;
    padding-right: 6px;
}

.lefttools {
    display: flex;
    align-items: center;
    gap: 5px;
    height: 18px;
    background: #d9d9d9;
    padding: 0 1px 0 4px;
}

.lefttools svg {
    width: 11px;
    height: 11px;
}

.listbtn {
    margin-left: auto;
    border: 1px solid #66719c;
    background: #f0f2f8;
    padding: 1px;
}

.band {
    height: 15px;
    background: #b3b3b3;
    border-top: 1px solid #a5a5a5;
}

.lefttree {
    flex: 1;
    background: linear-gradient(90deg, #dfdfdf 149px, #cfcfcf 149px, #cfcfcf 150px, #dfdfdf 150px);
}

.lefttree .l0 { padding-left: 2px; }
.lefttree .l1 { padding-left: 14px; }
.lefttree .l2 { padding-left: 26px; }

.lefttree .current {
    background: #cacaca;
    border-bottom: 1px solid #aaa;
    box-shadow: inset 0 1px #aaa;
}

.lefttree .shade {
    background: #d2d2d2;
}

.lefttree .pen {
    width: 9px;
    margin: 0 1px 0 auto;
}

.left .hthumb {
    width: 129px;
    margin-right: auto;
}

/* editor */
.main {
    position: relative;
    display: flex;
    flex-direction: column;
    height: 652px;
    background: #dbdcdc;
}

.mainhead {
    display: flex;
    align-items: center;
    height: 17px;
    background: #353a4c;
    border-bottom: 1px solid #e6e6e6;
    color: #f2f2f2;
    font-weight: 600;
    font-size: 9px;
    padding: 0 4px 0 3px;
}

.mainhead > i {
    border-left: 3px solid #fff;
    border-top: 3px solid transparent;
    border-bottom: 3px solid transparent;
    margin: 0 7px 0 7px;
}

.mainhead > i + span + i {
    margin: 0 7px 0 9px;
}

.mainhead .winbtns {
    margin-left: auto;
}

.mainhead .winbtns svg {
    width: 8px;
    height: 8px;
}

.maintabs {
    display: flex;
    height: 18px;
    background: #c4c4c4;
    border-bottom: 1px solid #8f8f8f;
    padding: 3px 0 0 483px;
}

.tab {
    height: 14px;
    background: linear-gradient(#cfcfcf, #c0c0c0);
    border: 1px solid #8c8c8c;
    border-bottom: none;
    margin-right: 1px;
    padding-left: 7px;
    font-size: 8.85px;
    font-weight: 600;
    color: #777;
    line-height: 13px;
}

.tab.active {
    height: 15px;
    background: #dcdcdc;
    color: #1c1c1c;
}

.tab.t1 { width: 106px; }
.tab.t2 { width: 122px; }
.tab.t3 { width: 41px; }
.tab.t4 { width: 125px; }

.content {
    flex: 1;
    padding-left: 4px;
    background: linear-gradient(#d8d8d8, #dcdddd 60px);
}

.maintools {
    height: 22px;
    padding: 4px 0 0 1px;
}

.card {
    width: 560px;
    background: #bdbdbd;
    border: 1px solid #adadad;
    margin-bottom: 4px;
}

.load { height: 233px; padding: 18px 0 0 32px; }
.points { height: 63px; }
.cfc { height: 218px; }

.overall {
    display: flex;
    align-items: center;
    font-weight: 600;
    font-size: 8.65px;
}

.overall span {
    width: 121px;
}

.dot {
    width: 10px;
    height: 10px;
    border-radius: 50%;
    background: #12ab1c;
    border: 1px solid #2fb636;
}

.arealabel {
    font-weight: 600;
    font-size: 8.6px;
    margin: 12px 0 6px;
}

table {
    width: 367px;
    border-collapse: collapse;
    table-layout: fixed;
    background: #dedede;
}

th {
    height: 12px;
    background: linear-gradient(#d6d6d6, #cfcfcf);
    border-right: 1px solid #a9a9a9;
    font-weight: normal;
    text-align: left;
    line-height: 11px;
    padding: 0 0 0 2px;
}

th.c1 { width: 46px; }
th.c2 { width: 173px; }

th:last-child {
    border-right: none;
}

td {
    height: 12.66px;
    line-height: 10px;
    padding: 0 0 0 3px;
    background: #cfcfcf;
    border-bottom: 1px solid #e8e8e8;
    border-right: 1px solid #e8e8e8;
}

td svg {
    width: 8px;
    height: 8px;
    margin-left: 15px;
}

td.tight {
    letter-spacing: -0.06px;
}

td:last-child, .blank td {
    background: #dedede;
}

.sel td:not(:last-child) {
    border-top: 1px solid #4a6a9e;
    border-bottom: 1px solid #4a6a9e;
}

.sel td:nth-child(2) {
    background: #a9b7d0;
}

.note {
    display: flex;
    gap: 4px;
    margin-top: 3px;
}

.note svg {
    width: 11px;
    height: 11px;
}

.note p {
    margin: 1px 0 0;
    line-height: 9.5px;
}

h2 {
    margin: 2px 0 0 9px;
    font-size: 8.8px;
    font-weight: 600;
    line-height: 13px;
}

.gauge {
    margin: 8px 0 0 37px;
    height: 37px;
}

h2 + .gauge {
    margin-top: 10px;
}

.gauge.g0 {
    margin: 2px 0 0 33px;
}

.glabel {
    margin-left: 2px;
}

.scale {
    display: flex;
    margin: 1px 0 0 2px;
}

.scale .limit {
    flex: none;
    width: 109px;
    text-align: right;
}

.scale .used {
    margin-left: 35px;
}

.meter {
    display: flex;
    align-items: center;
    height: 12px;
}

.meter span {
    line-height: 10px;
    padding-bottom: 2px;
}

.bar {
    width: 106px;
    height: 10px;
    background: #e9e9e9;
}

.bar i {
    display: block;
    height: 10px;
    background: #5fa96d;
    border: 1px solid #a5cfab;
}

.over {
    width: 36px;
    height: 10px;
    margin: 0 6px 0 2px;
    background: #e9e9e9;
}

.g0 .meter {
    margin-left: -1px;
}

.g0 .over {
    margin-right: 8px;
}

.inspector {
    display: flex;
    align-items: center;
    height: 19px;
    background: #a9a9a9;
    border-top: 2px solid #22263a;
    padding-left: 627px;
}

.itab {
    display: flex;
    align-items: center;
    height: 15px;
    background: linear-gradient(#c6c6c6, #b8b8b8);
    border: 1px solid #8f8f8f;
    font-size: 8.8px;
    font-weight: 600;
    color: #777;
    gap: 2px;
    padding-left: 1px;
}

.itab.active {
    background: #e0e0e0;
    color: #1c1c1c;
}

.i1 { width: 75px; }
.i2 { width: 51px; }
.i3 { width: 82px; }

.i3 {
    padding-left: 2px;
}

.itab .warn {
    margin-left: 4px;
}

.ibtns {
    display: flex;
    gap: 4px;
    margin-left: 12px;
}

.ibtns svg {
    width: 8px;
    height: 8px;
}

.cursor {
    position: absolute;
    left: 235px;
    top: 348px;
    width: 10px;
    height: 14px;
}

/* libraries */
.right {
    display: flex;
    flex-direction: column;
    height: 652px;
    border-left: 2px solid #20243a;
    border-right: 1px solid #777;
    background: #dadada;
}

.options {
    height: 18px;
    background: linear-gradient(#e2e2e2, #cfcfcf);
    border-bottom: 1px solid #8f8f8f;
    font-weight: 600;
    font-size: 8.8px;
    line-height: 22px;
    padding-left: 3px;
}

.optbar {
    height: 19px;
    padding: 3px 3px 0 0;
}

.optbar svg {
    margin-left: auto;
}

.acc {
    display: flex;
    align-items: center;
    height: 15px;
    margin-bottom: 1px;
    background: linear-gradient(#dedede, #c8c8c8);
    border-top: 1px solid #8f8f8f;
    border-bottom: 1px solid #8f8f8f;
    font-weight: 600;
    font-size: 8.8px;
}

.acc span {
    width: 14px;
    height: 100%;
    border-right: 1px solid #999;
    margin-right: 2px;
    padding: 3px 0 0 2px;
}

.acc span svg {
    width: 8px;
    height: 8px;
}

.acc.global {
    margin: 0;
    height: 16px;
}

.libtools {
    display: flex;
    align-items: center;
    gap: 5px;
    height: 17px;
    padding: 0 3px 1px 5px;
}

.libtools svg {
    width: 11px;
    height: 11px;
}

.libtools .push {
    margin-left: auto;
}

.libtools b {
    border-left: 3px solid #111;
    border-top: 3px solid transparent;
    border-bottom: 3px solid transparent;
    margin: -6px 0 0 -2px;
}

.libbody {
    display: flex;
    height: 522px;
}

.libtree {
    width: 184px;
    padding-top: 0.6px;
}

.libtree svg {
    margin-right: 2px;
}

.tree.libtree .shut::before {
    margin-left: 5px;
}

.tree.libtree .open::before {
    margin-left: 4px;
}

.libtree .r0 { padding-left: 20px; }
.libtree .r1 { padding-left: 31px; }
.libtree .r2 { padding-left: 41px; }
.libtree .r3 { padding-left: 52px; }
.libtree .r4 { padding-left: 64px; }

.libtree .r4 svg {
    width: 10px;
}

.el svg {
    background: #e8e8e8;
}

mark {
    background: #c3c3c3;
    color: inherit;
    line-height: 11px;
}

.vscroll {
    width: 13px;
    display: flex;
    flex-direction: column;
    background: #b4b4b4;
    border-left: 1px solid #c9c9c9;
}

.vthumb {
    display: flex;
    flex-direction: column;
    align-items: center;
    justify-content: center;
    gap: 1px;
    height: 272px;
    margin: 152px 0 auto;
    background: linear-gradient(90deg, #dedede, #cacaca);
    border: 1px solid #a8a8a8;
}

.vthumb i {
    width: 5px;
    height: 1px;
    background: #777;
}

.right .hscroll {
    padding-right: 13px;
}

.right .hthumb {
    width: 129px;
    margin: 0 auto 0 1px;
}

.acc.bottom {
    height: 16px;
    margin: 1px 0 0;
}

/* right edge tabs */
.sidetabs {
    background: #a3a3a3;
    height: 652px;
    padding-top: 20px;
}

.side {
    width: 14px;
    border: 1px solid #888;
    border-left: none;
    background: #c5c5c5;
    padding-top: 2px;
}

.side svg {
    width: 11px;
    height: 11px;
    margin-left: 1px;
}

.side span {
    display: block;
    writing-mode: vertical-rl;
    font-size: 8.8px;
    font-weight: 600;
    line-height: 11px;
    margin-top: 1px;
    color: #666;
}

.tasks {
    height: 52px;
    margin-bottom: 2px;
}

.libs {
    height: 67px;
    background: #dedede;
}

.side.libs span {
    color: #222;
}

/* status bar */
.statusbar {
    display: flex;
    align-items: center;
    background: #262626;
    padding: 0 0 2px 4px;
    font-size: 7.9px;
}

.task {
    display: flex;
    align-items: center;
    gap: 3px;
    height: 14px;
    width: 76px;
    background: #bcbcbc;
    margin-right: 1px;
    padding-left: 2px;
}

.task.t2 {
    background: #ebebeb;
    color: #111;
    font-size: 8.3px;
}

.message {
    display: flex;
    align-items: center;
    gap: 4px;
    margin: 2px 36px 0 auto;
    color: #d8d8d8;
    font-size: 7.7px;
}
```
